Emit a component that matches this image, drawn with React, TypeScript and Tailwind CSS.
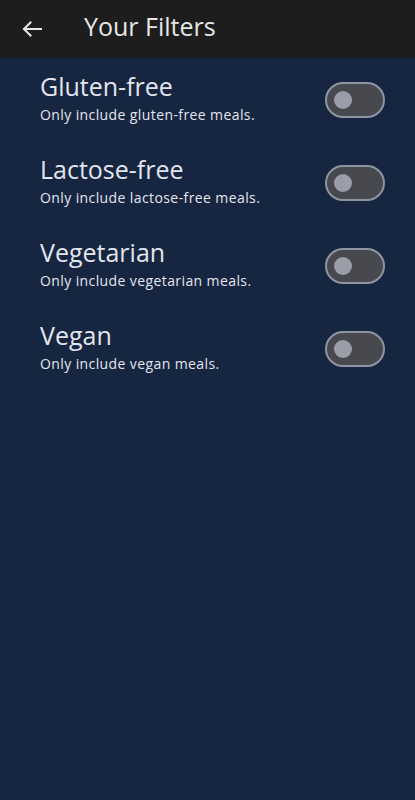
import React from "react";

const filters = [
  { title: "Gluten-free", sub: "Only include gluten-free meals." },
  { title: "Lactose-free", sub: "Only include lactose-free meals." },
  { title: "Vegetarian", sub: "Only include vegetarian meals." },
  { title: "Vegan", sub: "Only include vegan meals." },
];

function Toggle() {
  return (
    <div className="w-[60px] h-[36px] rounded-full border-2 border-[#8f94a2] bg-[#47494f] flex items-center pl-[7px] shrink-0">
      <div className="w-[18px] h-[18px] rounded-full bg-[#9b9ea9]" />
    </div>
  );
}

export default function App() {
  return (
    <div
      className="w-[415px] h-[800px] bg-[#162641] flex flex-col"
      style={{ fontFamily: '"Open Sans", Roboto, sans-serif' }}
    >
      <div className="h-[58px] bg-[#1d1d1d] flex items-center shrink-0">
        <svg className="ml-[22px]" width="20" height="16" viewBox="0 0 20 16" fill="none">
          <path d="M19 8H2M8.5 1.5L2 8l6.5 6.5" stroke="#e6e6e6" strokeWidth="2" strokeLinecap="square" />
        </svg>
        <div className="ml-[42px] mb-[5px] text-[25px] text-[#e6e6e6] leading-none">Your Filters</div>
      </div>
      <div className="flex flex-col">
        {filters.map((f) => (
          <div key={f.title} className="h-[83px] pl-[40px] pr-[30px] flex items-center justify-between">
            <div className="flex flex-col">
              <div className="text-[25px] leading-[30px] text-[#e3e5ee]">{f.title}</div>
              <div className="text-[14px] leading-[28px] text-[#e3e5ee] tracking-[0.4px]">{f.sub}</div>
            </div>
            <Toggle />
          </div>
        ))}
      </div>
    </div>
  );
}
